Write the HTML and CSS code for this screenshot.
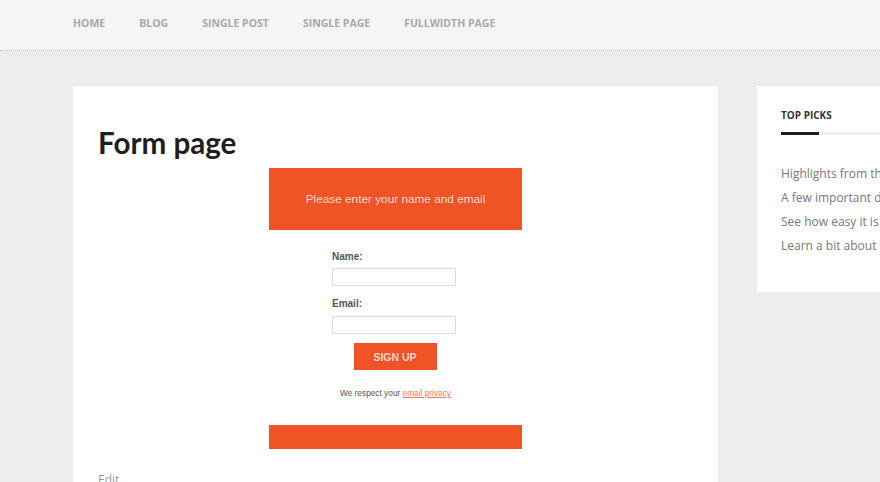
FILE: index.html
```html
<!DOCTYPE html>
<html>
<head>
<meta charset="utf-8">
<title>Form page</title>
<link rel="stylesheet" href="styles.css">
</head>
<body>
<header class="site-header">
  <nav class="nav">
    <a class="nav-link" href="#">Home</a>
    <a class="nav-link" href="#">Blog</a>
    <a class="nav-link" href="#">Single Post</a>
    <a class="nav-link" href="#">Single Page</a>
    <a class="nav-link" href="#">Fullwidth Page</a>
  </nav>
</header>
<div class="layout">
  <main class="main-card">
    <h1 class="page-title">Form page</h1>
    <div class="widget">
      <div class="widget-head">Please enter your name and email</div>
      <form class="widget-form">
        <label class="field-label">Name:</label>
        <input class="field-input name-input" type="text">
        <label class="field-label email-label">Email:</label>
        <input class="field-input" type="text">
        <div class="btn-row"><button class="btn" type="button">SIGN UP</button></div>
        <p class="privacy">We respect your <a href="#">email privacy</a></p>
      </form>
      <div class="widget-foot"></div>
    </div>
    <a class="edit-link" href="#">Edit</a>
  </main>
  <aside class="side-card">
    <h3 class="side-title">TOP PICKS</h3>
    <div class="side-rule"><span class="side-rule-dark"></span></div>
    <ul class="side-list">
      <li>Highlights from the archive</li>
      <li>A few important details</li>
      <li>See how easy it is to get started</li>
      <li>Learn a bit about our team</li>
    </ul>
  </aside>
</div>
</body>
</html>
```

FILE: styles.css
```css
* { box-sizing: border-box; }
html, body { margin: 0; padding: 0; }
body {
  background: #ededec;
  font-family: "Open Sans", "Liberation Sans", sans-serif;
  overflow: hidden;
  width: 880px;
  height: 482px;
}
.site-header {
  background: #f5f5f5;
  height: 51px;
  border-bottom: 1px dotted #c4c4c4;
}
.nav {
  display: flex;
  gap: 34px;
  padding: 15px 0 0 73px;
}
.nav-link {
  font-size: 10.5px;
  font-weight: 700;
  text-transform: uppercase;
  color: #a9a9a9;
  text-decoration: none;
  line-height: 16px;
}
.layout {
  display: flex;
  gap: 39px;
  padding: 35px 0 0 73px;
  align-items: flex-start;
}
.main-card {
  flex: 0 0 645px;
  background: #fff;
  height: 420px;
  padding: 39px 25px 0 25px;
}
.page-title {
  font-family: "Lato", "Liberation Sans", sans-serif;
  font-weight: 700;
  font-size: 29.6px;
  line-height: 36px;
  color: #1e1e1e;
  margin: 0;
}
.widget {
  width: 253px;
  margin: 7px auto 0;
  font-family: "Liberation Sans", Arial, sans-serif;
}
.widget-head {
  height: 62px;
  background: #ef5326;
  color: #fcd9cc;
  font-size: 11.8px;
  display: flex;
  align-items: center;
  justify-content: center;
}
.widget-form {
  display: flex;
  flex-direction: column;
  padding: 20px 0 0 63px;
  margin: 0;
}
.field-label {
  font-size: 10px;
  font-weight: 700;
  color: #555;
  line-height: 14px;
}
.email-label { margin-top: 11px; }
.field-input {
  width: 124px;
  height: 18px;
  margin: 4px 0 0;
  border: 1px solid #dcdcdc;
  background: #fff;
  padding: 0;
}
.email-label + .field-input { margin-top: 5px; }
.btn-row {
  width: 124px;
  display: flex;
  justify-content: center;
  margin-top: 9px;
}
.btn {
  width: 83px;
  height: 27px;
  background: #ef5326;
  border: 0;
  color: #fbd6c8;
  font-family: "Liberation Sans", Arial, sans-serif;
  font-size: 10.5px;
  font-weight: 700;
  padding: 0;
  margin-left: 2px;
}
.privacy {
  margin: 17px 0 0 -63px;
  width: 253px;
  text-align: center;
  font-size: 8.3px;
  line-height: 12px;
  color: #555;
}
.privacy a { color: #f07a55; }
.widget-foot {
  height: 24px;
  background: #ef5326;
  margin-top: 26px;
}
.edit-link {
  display: block;
  margin-top: 23px;
  font-size: 12px;
  line-height: 16px;
  color: #999;
  text-decoration: none;
}
.side-card {
  flex: 0 0 250px;
  background: #fff;
  padding: 22px 0 34px 24px;
}
.side-title {
  margin: 0;
  font-size: 10px;
  font-weight: 700;
  line-height: 14px;
  color: #333;
}
.side-rule {
  margin-top: 10px;
  height: 3px;
  background: #efefef;
}
.side-rule-dark {
  display: block;
  width: 38px;
  height: 3px;
  background: #1e1e1e;
}
.side-list {
  list-style: none;
  margin: 27px 0 0;
  padding: 0;
  font-size: 12px;
  line-height: 24px;
  color: #777;
  white-space: nowrap;
}
```
